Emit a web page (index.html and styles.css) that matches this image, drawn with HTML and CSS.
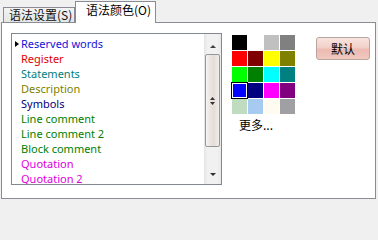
FILE: index.html
```html
<!DOCTYPE html>
<html lang="zh">
<head>
<meta charset="utf-8">
<title>语法颜色</title>
<link rel="stylesheet" href="styles.css">
</head>
<body>
<div class="dlg">
  <div class="tabs">
    <div class="tab tab-first">语法设置(S)</div>
    <div class="tab tab-active">语法颜色(O)</div>
  </div>
  <div class="panel">
    <div class="listbox">
      <ul class="items">
        <li class="cur c-blue">Reserved words</li>
        <li class="c-red">Register</li>
        <li class="c-teal">Statements</li>
        <li class="c-olive">Description</li>
        <li class="c-navy">Symbols</li>
        <li class="c-green">Line comment</li>
        <li class="c-green">Line comment 2</li>
        <li class="c-green">Block comment</li>
        <li class="c-mag">Quotation</li>
        <li class="c-mag">Quotation 2</li>
      </ul>
      <div class="scroll">
        <div class="sb-up"><span class="arr-up"></span></div>
        <div class="thumb">
          <svg class="grip" width="5" height="8" viewBox="0 0 5 8"><path d="M2.5 0 L5 3 L0 3 Z M0 5 L5 5 L2.5 8 Z" fill="#333"/></svg>
        </div>
        <div class="sb-down"><span class="arr-down"></span></div>
      </div>
    </div>
    <div class="palette-col">
      <div class="palette">
        <span class="cell k1"></span><span class="cell k2"></span><span class="cell k3"></span><span class="cell k4"></span>
        <span class="cell k5"></span><span class="cell k6"></span><span class="cell k7"></span><span class="cell k8"></span>
        <span class="cell k9"></span><span class="cell k10"></span><span class="cell k11"></span><span class="cell k12"></span>
        <span class="cell k13 sel"></span><span class="cell k14"></span><span class="cell k15"></span><span class="cell k16"></span>
        <span class="cell k17"></span><span class="cell k18"></span><span class="cell k19"></span><span class="cell k20"></span>
      </div>
      <div class="more">更多...</div>
    </div>
    <button class="btn">默认</button>
  </div>
</div>
</body>
</html>
```
FILE: styles.css
```css
html, body {
  margin: 0;
  height: 201px;
  overflow: hidden;
  background: #f0f0f0;
}
body {
  font-family: "Noto Sans", "Noto Sans CJK SC", sans-serif;
  color: #000;
}
.dlg {
  width: 378px;
}
.tabs {
  display: flex;
  align-items: flex-end;
  height: 22px;
  padding-left: 3px;
}
.tab {
  box-sizing: border-box;
  border: 1px solid #898c95;
  border-bottom: none;
  font-family: "Noto Sans CJK SC", sans-serif;
  font-size: 12px;
  white-space: nowrap;
}
.tab-first {
  width: 72px;
  height: 15px;
  line-height: 13px;
  padding-left: 5px;
  background: linear-gradient(#f3f3f3, #e6e6e6);
  color: #111;
}
.tab-active {
  position: relative;
  z-index: 1;
  width: 81px;
  height: 22px;
  margin-bottom: -1px;
  padding: 1px 0 0 10px;
  line-height: 14px;
  background: #fff;
}
.panel {
  box-sizing: border-box;
  margin-left: 1px;
  width: 375px;
  height: 177px;
  border: 1px solid #898c95;
  background: #fff;
  display: flex;
  align-items: flex-start;
  padding: 10px 0 0 9px;
}
.listbox {
  box-sizing: border-box;
  width: 211px;
  height: 152px;
  border: 1px solid #828790;
  display: flex;
  flex: none;
}
.items {
  flex: 1;
  list-style: none;
  margin: 0;
  padding: 2px 0 0 0;
  overflow: hidden;
  position: relative;
  font-size: 11px;
  line-height: 15px;
}
.items li {
  position: relative;
  padding-left: 9px;
  white-space: nowrap;
}
.items li.cur::before {
  content: "";
  position: absolute;
  left: 3px;
  top: 5px;
  border-left: 4px solid #000;
  border-top: 3.5px solid transparent;
  border-bottom: 3.5px solid transparent;
}
.c-blue { color: #1414d8; }
.c-red { color: #e00000; }
.c-teal { color: #008080; }
.c-olive { color: #808000; }
.c-navy { color: #000080; }
.c-green { color: #008000; }
.c-mag { color: #e000e0; }

.scroll {
  width: 17px;
  flex: none;
  display: flex;
  flex-direction: column;
  background: linear-gradient(to right, #e4e4e4, #f1f1f1 20%, #f1f1f1 80%, #e9e9e9);
}
.sb-up {
  height: 20px;
  box-sizing: border-box;
  display: flex;
  justify-content: center;
  align-items: flex-end;
  padding-bottom: 6px;
}
.arr-up {
  width: 0;
  height: 0;
  border-bottom: 3px solid #404040;
  border-left: 3px solid transparent;
  border-right: 3px solid transparent;
}
.thumb {
  box-sizing: border-box;
  height: 93px;
  margin: 0 1px;
  border: 1px solid #979797;
  border-radius: 2px;
  background: linear-gradient(to right, #f4f4f4, #ebe3df 35%, #e6dcd6 60%, #eeeeee);
  display: flex;
  align-items: center;
  justify-content: center;
}
.grip {
  display: block;
}
.sb-down {
  flex: 1;
  display: flex;
  justify-content: center;
  align-items: flex-end;
  padding-bottom: 8px;
}
.arr-down {
  width: 0;
  height: 0;
  border-top: 3px solid #303030;
  border-left: 3.5px solid transparent;
  border-right: 3.5px solid transparent;
}

.palette-col {
  margin-left: 10px;
  margin-top: 2px;
  flex: none;
}
.palette {
  display: grid;
  grid-template-columns: repeat(4, 15px);
  grid-auto-rows: 15px;
  gap: 1px;
}
.cell { display: block; }
.sel { box-shadow: 0 0 0 1px #000, inset 0 0 0 1px #fff; }
.k1 { background: #000000; }
.k2 { background: #ffffff; }
.k3 { background: #c0c0c0; }
.k4 { background: #808080; }
.k5 { background: #ff0000; }
.k6 { background: #800000; }
.k7 { background: #ffff00; }
.k8 { background: #808000; }
.k9 { background: #00ff00; }
.k10 { background: #008000; }
.k11 { background: #00ffff; }
.k12 { background: #008080; }
.k13 { background: #0000ff; }
.k14 { background: #000080; }
.k15 { background: #ff00ff; }
.k16 { background: #800080; }
.k17 { background: #c0dcc0; }
.k18 { background: #a6caf0; }
.k19 { background: #fffbf0; }
.k20 { background: #a0a0a4; }
.more {
  margin-top: 3px;
  padding-left: 7px;
  font-family: "Noto Sans CJK SC", sans-serif;
  font-size: 12px;
  line-height: 16px;
}
.btn {
  margin-left: 21px;
  margin-top: 4px;
  width: 54px;
  height: 23px;
  padding: 0;
  border: 1px solid #b9a49f;
  border-radius: 3px;
  background: linear-gradient(#f8e4df, #f3d0c8 45%, #ecbab1 55%, #f1c8c0);
  font-family: "Noto Sans CJK SC", sans-serif;
  font-size: 12px;
  color: #000;
  flex: none;
}
```
